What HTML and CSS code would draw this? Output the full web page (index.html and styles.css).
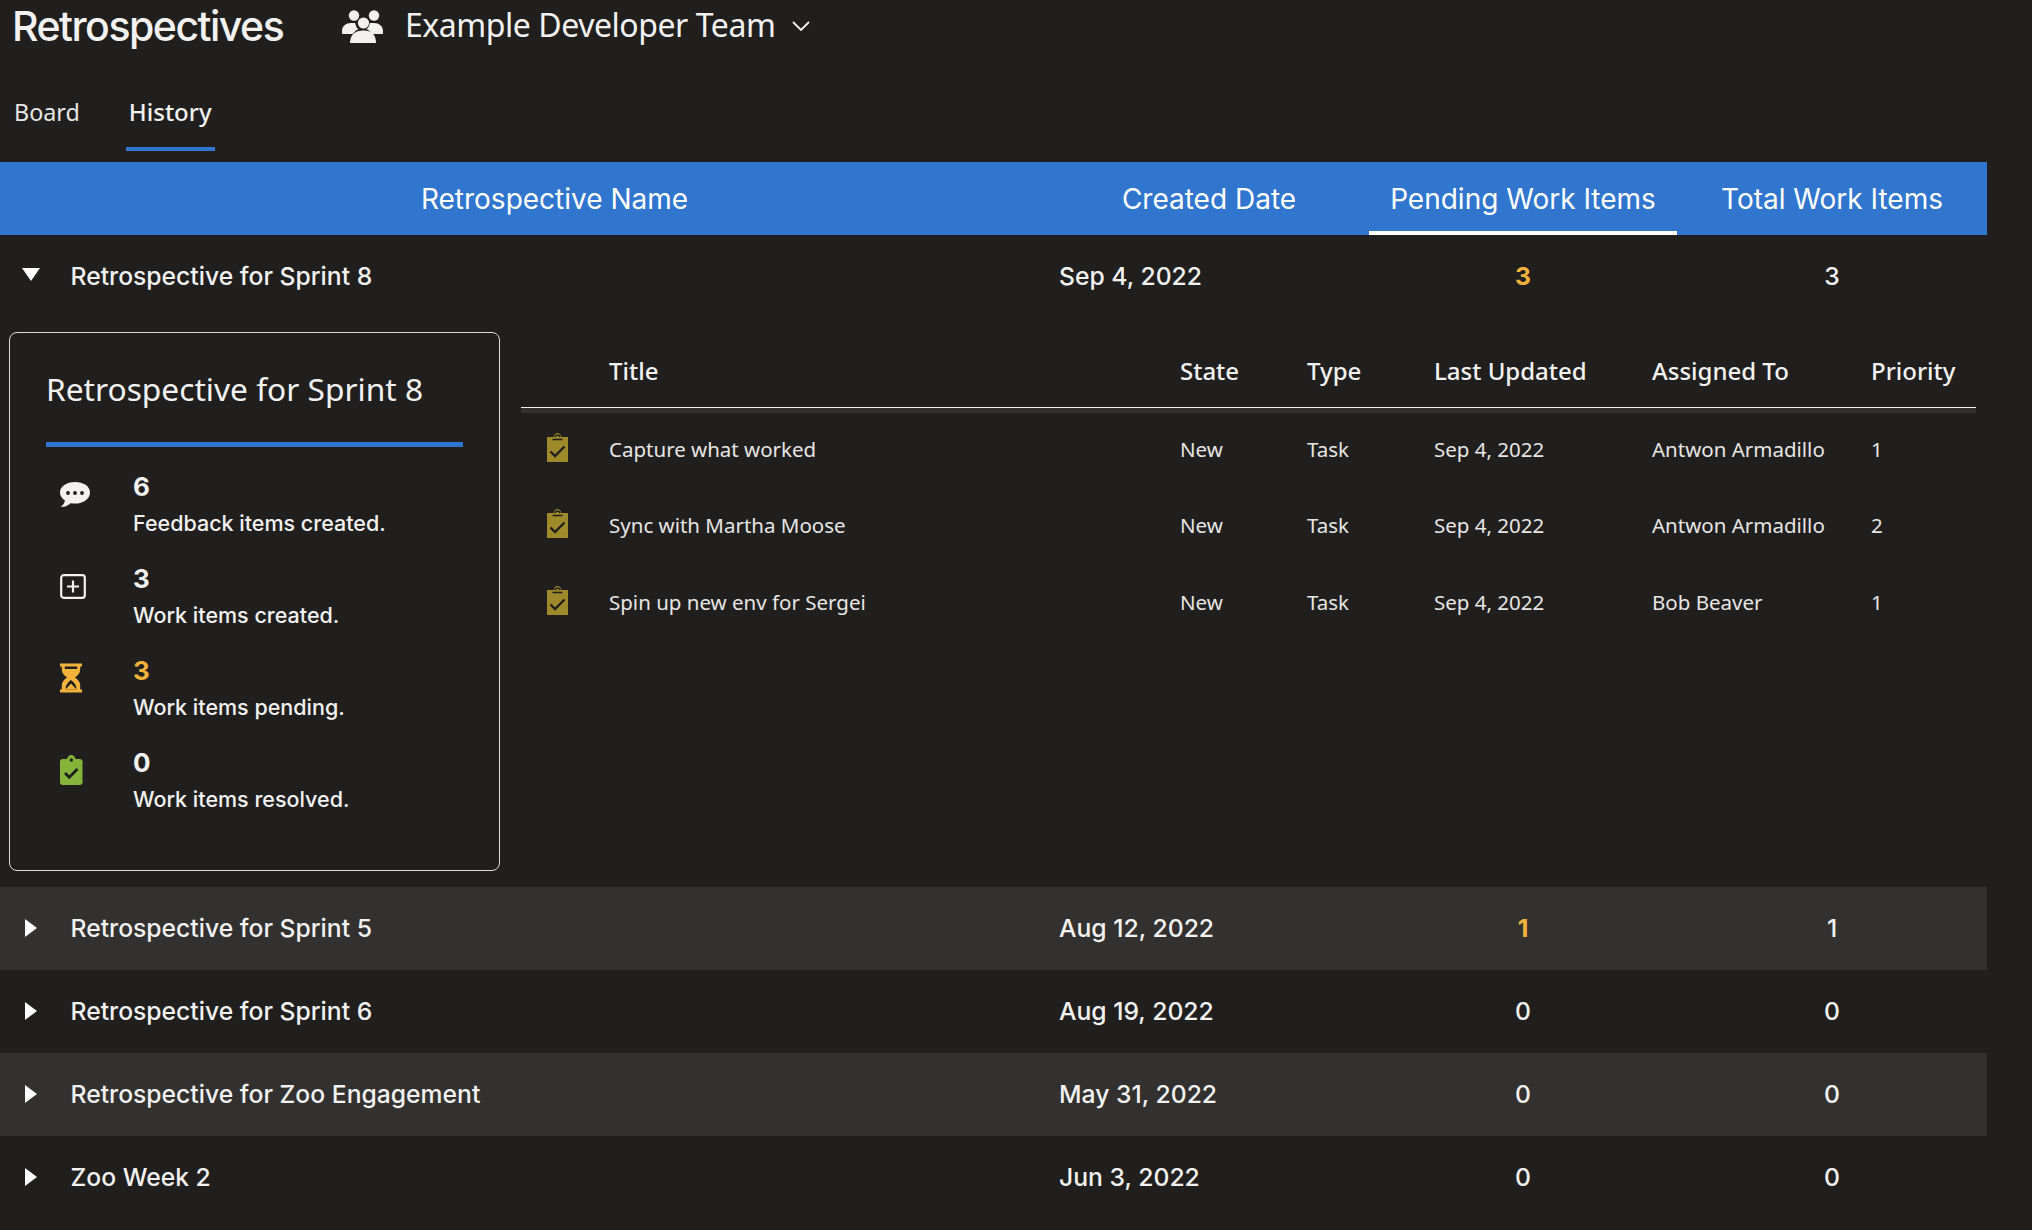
FILE: index.html
```html
<!DOCTYPE html>
<html lang="en">
<head>
<meta charset="utf-8">
<title>Retrospectives</title>
<link rel="stylesheet" href="styles.css">
</head>
<body>
<header class="topbar">
  <h1 class="app-title">Retrospectives</h1>
  <div class="team">
    <svg class="team-icon" viewBox="0 0 41 33"><g fill="#f3f2f1"><circle cx="12" cy="5.5" r="5.2"/><circle cx="32" cy="5.5" r="5.2"/><circle cx="21.500" cy="13" r="5.600"/><path d="M0 21c0-5 4-8 9-8h4.200c.3 2.600 1.300 4.600 3.300 6.200-2.500 1-4.500 2.500-5.500 4.800H1c-.6 0-1-.4-1-1z"/><path d="M41 21c0-5-4-8-9-8h-4.200c-.3 2.600-1.300 4.600-3.300 6.200 2.500 1 4.500 2.500 5.500 4.800H40c.6 0 1-.4 1-1z"/><path d="M8 33c0-8 5-12.500 13.500-12.500S34 25 34 33z"/></g></svg>
    <span class="team-name">Example Developer Team</span>
    <svg class="chevron" viewBox="0 0 18 10"><path d="M1 1l8 8 8-8" fill="none" stroke="#f3f2f1" stroke-width="1.800"/></svg>
  </div>
</header>
<nav class="tabs">
  <div class="tab">Board</div>
  <div class="tab tab-active">History</div>
</nav>
<main class="history">
  <div class="grid grid-head">
    <div class="hcell"></div>
    <div class="hcell">Retrospective Name</div>
    <div class="hcell">Created Date</div>
    <div class="hcell hcell-sorted">Pending Work Items</div>
    <div class="hcell">Total Work Items</div>
  </div>
  <div class="grid row">
    <div class="caret-cell"><span class="caret-down"></span></div>
    <div class="name">Retrospective for Sprint 8</div>
    <div class="date">Sep 4, 2022</div>
    <div class="num amber">3</div>
    <div class="num">3</div>
  </div>
  <section class="detail">
    <aside class="card">
      <h2 class="card-title">Retrospective for Sprint 8</h2>
      <div class="card-rule"></div>
      <div class="stat">
        <svg class="stat-icon" viewBox="0 0 30 25"><path fill="#f3f2f1" d="M15 0C6.700 0 0 4.500 0 10.500c0 3.400 2 6.200 5 8.100-.5 2.500-1.800 4.800-4.500 6.200 4 .2 7.600-1 10-3.600 1.400.3 2.900.4 4.500.4 8.300 0 15-4.700 15-11.100S23.300 0 15 0z"/><circle cx="8" cy="11" r="1.900" fill="#201f1e"/><circle cx="15" cy="11" r="1.900" fill="#201f1e"/><circle cx="22" cy="11" r="1.900" fill="#201f1e"/></svg>
        <div><div class="stat-num">6</div><div class="stat-label">Feedback items created.</div></div>
      </div>
      <div class="stat">
        <svg class="stat-icon" viewBox="0 0 30 25"><rect x="1.200" y="1.200" width="23.600" height="22.600" rx="2.500" fill="none" stroke="#f3f2f1" stroke-width="2.200"/><path d="M13 6.500v12M7 12.500h12" stroke="#f3f2f1" stroke-width="2.200" fill="none"/></svg>
        <div><div class="stat-num">3</div><div class="stat-label">Work items created.</div></div>
      </div>
      <div class="stat">
        <svg class="stat-icon stat-icon-tall" viewBox="0 0 30 29"><path fill="#f2b33d" fill-rule="evenodd" d="M0 0h22v3h-1.800v3.500c0 3-2.600 5.600-5.200 7.500 2.600 1.900 5.200 4.500 5.200 7.500V26H22v3H0v-3h1.800v-4.500c0-3 2.600-5.600 5.200-7.500-2.600-1.900-5.200-4.500-5.200-7.500V3H0zM4.800 3v2.500h12.400V3zM11 16.500c-2.300 1.800-4 3.500-5.200 6.500V26h10.400v-3c-1.200-3-2.900-4.700-5.200-6.500z"/><path fill="#f2b33d" d="M5.500 26l5.500-6 5.500 6z"/></svg>
        <div><div class="stat-num amber">3</div><div class="stat-label">Work items pending.</div></div>
      </div>
      <div class="stat">
        <svg class="stat-icon stat-icon-tall" viewBox="0 0 30 30"><path fill="#86b43a" d="M2.500 4H7c.6-2.300 2.200-4 4.300-4s3.700 1.700 4.300 4h4.400c1.400 0 2.500 1.100 2.500 2.500v21c0 1.400-1.100 2.500-2.500 2.500h-17.500C1.100 30 0 28.900 0 27.500v-21C0 5.100 1.100 4 2.500 4z"/><circle cx="11.300" cy="5" r="1.700" fill="#201f1e"/><path d="M5 18l4.300 4.300L17.500 14" fill="none" stroke="#201f1e" stroke-width="2.800"/></svg>
        <div><div class="stat-num">0</div><div class="stat-label">Work items resolved.</div></div>
      </div>
    </aside>
    <div class="items">
      <div class="item-row item-head">
        <div></div><div>Title</div><div>State</div><div>Type</div><div>Last Updated</div><div>Assigned To</div><div>Priority</div>
      </div>
      <div class="item-band"></div>
      <div class="item-row">
        <svg class="task-icon" viewBox="0 0 21 29"><path fill="#9e8a2b" d="M0 4h6.500C7 1.700 8.500 0 10.500 0s3.500 1.700 4 4H21v25H0z"/><path d="M5.500 6.500h10M8 4.200c.3-1.300 1.200-2.200 2.500-2.200s2.200.9 2.500 2.200" fill="none" stroke="#201f1e" stroke-width="1.500"/><path d="M3.500 18.500l4.500 4.500 9.500-9.500" fill="none" stroke="#201f1e" stroke-width="2.400"/></svg>
        <div>Capture what worked</div><div>New</div><div>Task</div><div>Sep 4, 2022</div><div>Antwon Armadillo</div><div>1</div>
      </div>
      <div class="item-row">
        <svg class="task-icon" viewBox="0 0 21 29"><path fill="#9e8a2b" d="M0 4h6.500C7 1.700 8.500 0 10.500 0s3.500 1.700 4 4H21v25H0z"/><path d="M5.500 6.500h10M8 4.200c.3-1.300 1.200-2.200 2.500-2.200s2.200.9 2.500 2.200" fill="none" stroke="#201f1e" stroke-width="1.500"/><path d="M3.500 18.500l4.500 4.500 9.500-9.500" fill="none" stroke="#201f1e" stroke-width="2.400"/></svg>
        <div>Sync with Martha Moose</div><div>New</div><div>Task</div><div>Sep 4, 2022</div><div>Antwon Armadillo</div><div>2</div>
      </div>
      <div class="item-row">
        <svg class="task-icon" viewBox="0 0 21 29"><path fill="#9e8a2b" d="M0 4h6.500C7 1.700 8.500 0 10.500 0s3.500 1.700 4 4H21v25H0z"/><path d="M5.500 6.500h10M8 4.200c.3-1.300 1.200-2.200 2.500-2.200s2.200.9 2.500 2.200" fill="none" stroke="#201f1e" stroke-width="1.500"/><path d="M3.500 18.500l4.500 4.500 9.500-9.500" fill="none" stroke="#201f1e" stroke-width="2.400"/></svg>
        <div>Spin up new env for Sergei</div><div>New</div><div>Task</div><div>Sep 4, 2022</div><div>Bob Beaver</div><div>1</div>
      </div>
    </div>
  </section>
  <div class="grid row row-alt">
    <div class="caret-cell"><span class="caret-right"></span></div>
    <div class="name">Retrospective for Sprint 5</div>
    <div class="date">Aug 12, 2022</div>
    <div class="num amber">1</div>
    <div class="num">1</div>
  </div>
  <div class="grid row">
    <div class="caret-cell"><span class="caret-right"></span></div>
    <div class="name">Retrospective for Sprint 6</div>
    <div class="date">Aug 19, 2022</div>
    <div class="num">0</div>
    <div class="num">0</div>
  </div>
  <div class="grid row row-alt">
    <div class="caret-cell"><span class="caret-right"></span></div>
    <div class="name">Retrospective for Zoo Engagement</div>
    <div class="date">May 31, 2022</div>
    <div class="num">0</div>
    <div class="num">0</div>
  </div>
  <div class="grid row">
    <div class="caret-cell"><span class="caret-right"></span></div>
    <div class="name">Zoo Week 2</div>
    <div class="date">Jun 3, 2022</div>
    <div class="num">0</div>
    <div class="num">0</div>
  </div>
</main>
</body>
</html>
```
FILE: styles.css
```css
* { box-sizing: border-box; }
html, body { margin: 0; height: 100%; overflow: hidden; }
body {
  background: #201f1e;
  color: #f3f2f1;
  font-family: "Inter", "Liberation Sans", sans-serif;
}
.topbar {
  display: flex;
  align-items: center;
  height: 52px;
  padding-left: 12px;
}
.app-title {
  margin: 0;
  width: 330px;
  font-size: 41px;
  font-weight: 500;
  letter-spacing: -1.500px;
  line-height: 52px;
}
.team { display: flex; align-items: center; }
.team-icon { width: 41px; height: 33px; margin-right: 22px; }
.team-name {
  font-family: "Noto Sans", sans-serif;
  font-size: 32px;
  letter-spacing: -0.450px;
  line-height: 40px;
  width: 387px;
  margin-top: -2px;
}
.chevron { width: 18px; height: 10px; }
.tabs {
  display: flex;
  gap: 43px;
  height: 110px;
  padding: 26px 0 0 11px;
  font-family: "Noto Sans", sans-serif;
  font-size: 23.300px;
}
.tab {
  height: 73px;
  padding: 0 3px 2px;
  display: flex;
  align-items: center;
  border-bottom: 4px solid transparent;
  color: #e8e6e4;
}
.tab-active { border-bottom-color: #3176ce; color: #f3f2f1; font-weight: 500; font-size: 24px; }
.history { width: 1987px; }
.grid {
  display: grid;
  grid-template-columns: 60px 989px 320px 308px 310px;
}
.grid-head { height: 73px; background: #3176ce; }
.hcell {
  display: flex;
  align-items: center;
  justify-content: center;
  font-size: 28px;
  line-height: 34px;
  color: #fff;
}
.hcell-sorted { border-bottom: 4px solid #fff; padding-top: 4px; }
.row {
  height: 83px;
  padding-bottom: 2px;
  align-items: center;
  font-size: 24.700px;
  font-weight: 500;
}
.row-alt { background: #323130; }
.caret-cell { display: flex; padding-left: 25px; }
.caret-right {
  border-left: 12px solid #fff;
  border-top: 9px solid transparent;
  border-bottom: 9px solid transparent;
}
.caret-down {
  margin-left: -3px;
  border-top: 13px solid #fff;
  border-left: 9px solid transparent;
  border-right: 9px solid transparent;
  margin-top: -3px;
}
.name { padding-left: 10.500px; }
.date { padding-left: 10px; }
.num { text-align: center; }
.num.amber { font-weight: 700; }
.amber { color: #f2b33d; }
.detail {
  display: flex;
  align-items: flex-start;
  height: 569px;
  padding: 14px 0 0 9px;
}
.card {
  width: 491px;
  height: 539px;
  border: 1.500px solid #dedcda;
  border-radius: 8px;
  padding: 34px 36px 0 36px;
}
.card-title {
  margin: 0;
  font-family: "Noto Sans", sans-serif;
  font-size: 31.700px;
  font-weight: 400;
  line-height: 44px;
  white-space: nowrap;
}
.card-rule { height: 5px; background: #3176ce; margin-top: 31px; margin-bottom: 20px; }
.stat {
  display: grid;
  grid-template-columns: 87px 1fr;
  height: 92px;
}
.stat-icon { width: 30px; height: 25px; margin: 15px 0 0 14px; }
.stat-icon-tall { height: 30px; margin-top: 12px; }
.stat-num { font-size: 26px; font-weight: 700; line-height: 40px; }
.stat-label { font-size: 21.500px; font-weight: 500; line-height: 34px; margin-top: -1px; }
.items { width: 1455px; margin-left: 21px; }
.item-row {
  display: grid;
  grid-template-columns: 88px 571px 127px 127px 218px 219px 105px;
  align-items: center;
  height: 76.500px;
  padding-bottom: 5px;
  font-family: "Noto Sans", sans-serif;
  font-size: 20.500px;
  color: #e8e6e4;
}
.item-head {
  height: 76px;
  padding: 1px 0 0;
  border-bottom: 1.500px solid #f3f2f1;
  font-size: 24px;
  font-weight: 500;
  color: #f3f2f1;
}
.item-band { height: 5px; background: #323130; }
.task-icon { width: 21px; height: 29px; margin: -3px 0 0 26px; }
```
